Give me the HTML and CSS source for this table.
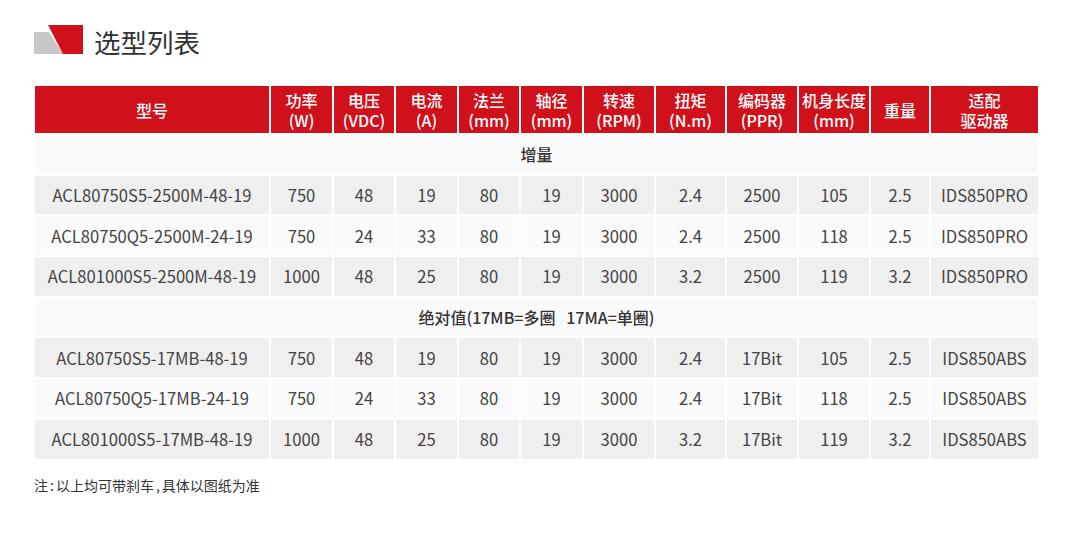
FILE: index.html
```html
<!DOCTYPE html>
<html lang="zh-CN">
<head>
<meta charset="utf-8">
<title>选型列表</title>
<link rel="stylesheet" href="styles.css">
</head>
<body>
<div class="page">
  <div class="title-bar">
    <svg class="logo" width="50" height="30" viewBox="0 0 50 30">
      <polygon points="0,7 15,7 29,29 0,29" fill="#c8c8c8"/>
      <polygon points="14,0 49,0 49,29 29,29" fill="#d0111b"/>
    </svg>
    <h1 class="title">选型列表</h1>
  </div>
  <table class="spec">
    <colgroup>
      <col class="c-model"><col class="c61"><col class="c60"><col class="c61"><col class="c60"><col class="c61"><col class="c70"><col class="c69"><col class="c70"><col class="c70"><col class="c58"><col class="c107">
    </colgroup>
    <thead>
      <tr>
        <th>型号</th>
        <th>功率<br>(W)</th>
        <th>电压<br>(VDC)</th>
        <th>电流<br>(A)</th>
        <th>法兰<br>(mm)</th>
        <th>轴径<br>(mm)</th>
        <th>转速<br>(RPM)</th>
        <th>扭矩<br>(N.m)</th>
        <th>编码器<br>(PPR)</th>
        <th>机身长度<br>(mm)</th>
        <th>重量</th>
        <th>适配<br>驱动器</th>
      </tr>
    </thead>
    <tbody>
      <tr class="group"><td colspan="12">增量</td></tr>
      <tr class="dark"><td>ACL80750S5-2500M-48-19</td><td>750</td><td>48</td><td>19</td><td>80</td><td>19</td><td>3000</td><td>2.4</td><td>2500</td><td>105</td><td>2.5</td><td>IDS850PRO</td></tr>
      <tr class="light"><td>ACL80750Q5-2500M-24-19</td><td>750</td><td>24</td><td>33</td><td>80</td><td>19</td><td>3000</td><td>2.4</td><td>2500</td><td>118</td><td>2.5</td><td>IDS850PRO</td></tr>
      <tr class="dark"><td>ACL801000S5-2500M-48-19</td><td>1000</td><td>48</td><td>25</td><td>80</td><td>19</td><td>3000</td><td>3.2</td><td>2500</td><td>119</td><td>3.2</td><td>IDS850PRO</td></tr>
      <tr class="group"><td colspan="12">绝对值(17MB=多圈&nbsp;&nbsp;&nbsp;17MA=单圈)</td></tr>
      <tr class="dark"><td>ACL80750S5-17MB-48-19</td><td>750</td><td>48</td><td>19</td><td>80</td><td>19</td><td>3000</td><td>2.4</td><td>17Bit</td><td>105</td><td>2.5</td><td>IDS850ABS</td></tr>
      <tr class="light"><td>ACL80750Q5-17MB-24-19</td><td>750</td><td>24</td><td>33</td><td>80</td><td>19</td><td>3000</td><td>2.4</td><td>17Bit</td><td>118</td><td>2.5</td><td>IDS850ABS</td></tr>
      <tr class="dark"><td>ACL801000S5-17MB-48-19</td><td>1000</td><td>48</td><td>25</td><td>80</td><td>19</td><td>3000</td><td>3.2</td><td>17Bit</td><td>119</td><td>3.2</td><td>IDS850ABS</td></tr>
    </tbody>
  </table>
  <p class="note">注<span class="punct">:</span>以上均可带刹车<span class="punct">,</span>具体以图纸为准</p>
</div>
</body>
</html>
```
FILE: styles.css
```css
* { box-sizing: border-box; }
html, body {
  margin: 0;
  padding: 0;
  background: #ffffff;
}
body {
  font-family: "Noto Sans CJK SC", "Noto Sans", sans-serif;
  color: #333333;
}
.page {
  width: 1066px;
  height: 545px;
  padding: 25px 0 0 34px;
}
.title-bar {
  display: flex;
  align-items: flex-end;
  height: 30px;
}
.logo {
  display: block;
  flex: none;
}
.title {
  margin: 0 0 0 10px;
  font-size: 26.5px;
  font-weight: 400;
  line-height: 30px;
  color: #333333;
  position: relative;
  top: 2px;
}
.spec {
  margin: 29px 0 0 -1px;
  border-collapse: separate;
  border-spacing: 2px 2px;
  table-layout: fixed;
  width: 1007px;
}
.c-model { width: 234px; }
.c61 { width: 61px; }
.c60 { width: 60px; }
.c70 { width: 70px; }
.c69 { width: 69px; }
.c58 { width: 58px; }
.c107 { width: 107px; }
.spec th {
  background: #d0111b;
  color: #ffffff;
  font-size: 16px;
  font-weight: 500;
  line-height: 20px;
  height: 47px;
  padding: 0;
  text-align: center;
  vertical-align: middle;
  white-space: nowrap;
}
.spec td {
  height: 38.7px;
  padding: 0;
  text-align: center;
  vertical-align: middle;
  font-size: 16.6px;
  line-height: 22px;
  color: #444444;
  white-space: nowrap;
}
.spec tr.dark td { background: #efefef; }
.spec tr.light td { background: #fafafa; }
.spec tr.group td {
  background: #fafafa;
  font-size: 16px;
  font-weight: 500;
  color: #333333;
}
.note {
  margin: 14px 0 0 0;
  font-size: 14px;
  line-height: 20px;
  color: #333333;
}
.punct {
  margin: 0 2px;
}
```
